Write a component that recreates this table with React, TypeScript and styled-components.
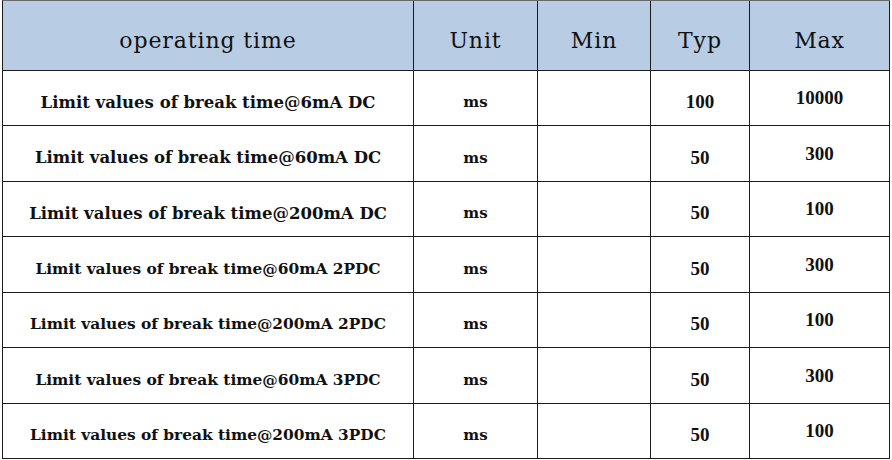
import React from "react";
import styled, { createGlobalStyle } from "styled-components";

const Global = createGlobalStyle`
  html, body { margin: 0; padding: 0; background: #ffffff; }
`;

const Grid = styled.div`
  display: grid;
  grid-template-columns: 411px 124px 113px 99px 140px;
  margin-left: 2px;
  width: max-content;
  border-left: 1px solid #1c1c1c;
  border-top: 1px solid #6a6a6a;
`;

const HeadCell = styled.div`
  box-sizing: border-box;
  height: 70px;
  background: #b8cce4;
  border-right: 1px solid #1c1c1c;
  border-bottom: 1px solid #1c1c1c;
  display: flex;
  align-items: center;
  justify-content: center;
  padding-top: 9px;
  font-family: "DejaVu Serif", "Liberation Serif", serif;
  font-size: 22px;
  letter-spacing: 0.9px;
  color: #111;
`;

const Cell = styled.div<{ $h: number; $kind: "label" | "unit" | "num"; $tight?: boolean; $lift?: boolean }>`
  box-sizing: border-box;
  height: ${(p) => p.$h}px;
  border-right: 1px solid #1c1c1c;
  border-bottom: 1px solid #1c1c1c;
  display: flex;
  align-items: center;
  justify-content: center;
  padding-top: ${(p) => (p.$lift ? 0 : 8)}px;
  color: #111;
  font-weight: bold;
  font-family: ${(p) =>
    p.$kind === "num"
      ? `"Liberation Serif", serif`
      : `"DejaVu Serif", "Liberation Serif", serif`};
  font-size: ${(p) =>
    p.$kind === "num" ? 19 : p.$kind === "unit" ? 15 : p.$tight ? 15.4 : 16.5}px;
  white-space: nowrap;
`;

const rows = [
  { label: "Limit values of break time@6mA DC", typ: "100", max: "10000" },
  { label: "Limit values of break time@60mA DC", typ: "50", max: "300" },
  { label: "Limit values of break time@200mA DC", typ: "50", max: "100" },
  { label: "Limit values of break time@60mA 2PDC", typ: "50", max: "300" },
  { label: "Limit values of break time@200mA 2PDC", typ: "50", max: "100" },
  { label: "Limit values of break time@60mA 3PDC", typ: "50", max: "300" },
  { label: "Limit values of break time@200mA 3PDC", typ: "50", max: "100" },
];

const heights = [55, 56, 55, 56, 55, 56, 55];

export default function App() {
  return (
    <>
      <Global />
      <Grid>
        <HeadCell>operating time</HeadCell>
        <HeadCell>Unit</HeadCell>
        <HeadCell>Min</HeadCell>
        <HeadCell>Typ</HeadCell>
        <HeadCell>Max</HeadCell>
        {rows.map((r, i) => (
          <React.Fragment key={i}>
            <Cell $h={heights[i]} $kind="label" $tight={i >= 3}>{r.label}</Cell>
            <Cell $h={heights[i]} $kind="unit">ms</Cell>
            <Cell $h={heights[i]} $kind="num"></Cell>
            <Cell $h={heights[i]} $kind="num">{r.typ}</Cell>
            <Cell $h={heights[i]} $kind="num" $lift>{r.max}</Cell>
          </React.Fragment>
        ))}
      </Grid>
    </>
  );
}
